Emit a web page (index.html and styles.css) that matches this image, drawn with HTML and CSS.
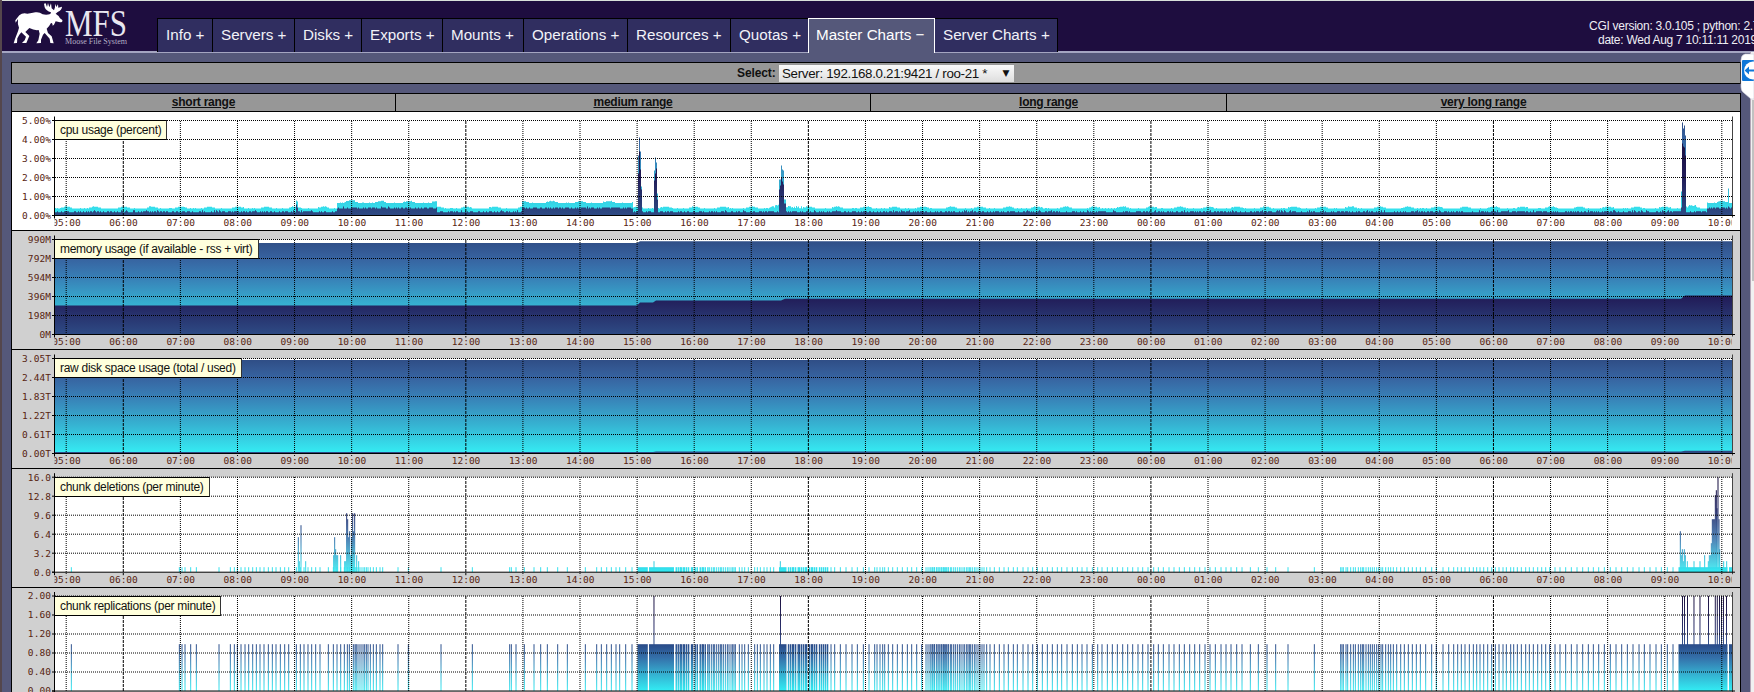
FILE: index.html
```html
<!DOCTYPE html>
<html lang="en">
<head>
<meta charset="utf-8">
<title>MFS Info - Master Charts</title>
<link rel="stylesheet" href="styles.css">
</head>
<body>
<div class="page">
  <header class="header">
    <svg class="logo" width="118" height="48" viewBox="0 0 118 48">
      <g transform="translate(-12 -1) scale(.33333)" fill="#fff">
        <path d="M58 46Q68 37 82 41Q96 40 106 37Q118 35 128 43Q140 46 151 42L153 37Q138 33 134 22L132 11L137 10L141 21L144 9L148 22L153 10L155 25L162 31L165 22L165 11L169 21L174 13L175 23L186 20Q186 30 173 36L167 41Q176 46 180 55L187 60Q189 67 180 67L167 64L162 74L158 77Q158 67 153 69Q148 79 140 86L144 99L155 109L161 130L151 129L149 116L134 99L129 104L123 119L123 129L109 130L115 121L119 101L116 90Q103 92 88 84L76 96L88 108L79 129L66 129L74 121L78 110L64 97L58 104L52 115L51 129L41 130L45 117L54 94L57 83Q52 72 54 57L47 68L46 61Z"/>
      </g>
      <text class="logo-name" x="53" y="35" textLength="62" lengthAdjust="spacingAndGlyphs">MFS</text>
      <text class="logo-sub" x="53" y="43" textLength="62" lengthAdjust="spacingAndGlyphs">Moose File System</text>
    </svg>
    <nav class="tabs">
      <a class="tab w-info">Info +</a><a class="tab w-servers">Servers +</a><a class="tab w-disks">Disks +</a><a class="tab w-exports">Exports +</a><a class="tab w-mounts">Mounts +</a><a class="tab w-operations">Operations +</a><a class="tab w-resources">Resources +</a><a class="tab w-quotas">Quotas +</a><a class="tab w-master active">Master Charts −</a><a class="tab w-server">Server Charts +</a>
    </nav>
    <div class="version"><div>CGI version: 3.0.105 ; python: 2.7.5</div><div class="date">date: Wed Aug 7 10:11:11 2019</div></div>
  </header>
  <div class="select-bar"><b>Select:</b><div class="select"><span>Server: 192.168.0.21:9421 / roo-21 *</span><span class="arrow">▼</span></div></div>
  <main class="panel">
    <div class="ranges"><a>short range</a><a>medium range</a><a>long range</a><a>very long range</a></div>
    <section class="chart white" id="cpu"><h2>cpu usage (percent)</h2></section>
    <section class="chart" id="memory"><h2>memory usage (if available - rss + virt)</h2></section>
    <section class="chart" id="disk"><h2>raw disk space usage (total / used)</h2></section>
    <section class="chart" id="deletions"><h2>chunk deletions (per minute)</h2></section>
    <section class="chart" id="replications"><h2>chunk replications (per minute)</h2></section>
  </main>
  <div class="scrollbar"><div class="thumb"></div></div>
  <svg class="widget" width="14" height="50" viewBox="0 0 14 50">
    <path d="M14 1H5Q1 2 1 7V34Q1 38 4 40L11 46H14Z" fill="#fff" stroke="#c9cad8" stroke-width=".6"/>
    <rect x="2" y="7" width="12" height="21" rx="1" fill="#0d76d8"/>
    <circle cx="13" cy="17.500" r="9" fill="#fff"/>
    <path d="M4.500 17.500L9 13.500V16.500H14V18.500H9V21.500Z" fill="#0d76d8"/>
  </svg>
</div>
<script src="charts.js"></script>
</body>
</html>
```
FILE: styles.css
```css
* { box-sizing: border-box; }
body { margin: 0; overflow: hidden; font-family: "Liberation Sans", Arial, sans-serif; color: #111; }
.page { position: relative; width: 1754px; height: 692px; overflow: hidden; background: #55587a; border-left: 2px solid #54464c; }
.header { display: flex; align-items: flex-start; height: 53px; background: #1e0d3f; border-top: 1px solid #d9e0da; border-bottom: 2px solid #a4a5c1; }
.logo { flex: none; margin: 0 0 0 10px; }
.logo-name { font: 37px "Liberation Serif", serif; fill: #e9e7f0; }
.logo-sub { font: 9px "Liberation Serif", serif; fill: #b5afc6; }
.tabs { display: flex; flex: none; margin: 17px 0 0 27px; height: 35px; }
.tab { display: block; height: 34px; padding: 7px 0 0 8px; border-left: 1px solid #000; border-top: 1px solid #000; background: #302e60; color: #f2f2f8; font-size: 15.2px; line-height: 18px; white-space: nowrap; }
.w-info { width: 55px; } .w-servers { width: 82px; } .w-disks { width: 67px; } .w-exports { width: 81px; }
.w-mounts { width: 81px; } .w-operations { width: 104px; } .w-resources { width: 103px; } .w-quotas { width: 78px; }
.w-master { width: 127px; } .w-server { width: 123px; border-left: 0; border-right: 1px solid #000; }
.tab.active { height: 35px; padding-left: 7px; background: #55587a; border: 1px solid #fff; border-bottom: 0; color: #fff; }
.version { flex: none; margin: 18px 0 0 531px; color: #eeeef4; font-size: 12px; letter-spacing: -.27px; line-height: 14px; white-space: nowrap; }
.date { padding-left: 9px; }
.select-bar { display: flex; align-items: center; gap: 4px; margin: 9px 0 0 9px; width: 1730px; height: 22px; padding-left: 725px; border: 1px solid #000; background: #979797; font-size: 12px; }
.select-bar b { width: 38px; letter-spacing: -.1px; }
.select { display: flex; justify-content: space-between; align-items: center; width: 235px; height: 17px; padding: 0 5px 0 3px; background: linear-gradient(#fafafa, #dedede); font-size: 13.33px; letter-spacing: -.31px; white-space: nowrap; }
.arrow { font: 9px "DejaVu Sans", sans-serif; }
.panel { margin: 9px 0 0 9px; width: 1730px; border: 1px solid #000; border-bottom: 0; }
.ranges { display: grid; grid-template-columns: 383px 475px 356px 1fr; height: 18px; background: #979797; border-bottom: 1px solid #000; font-size: 12px; font-weight: bold; letter-spacing: -.25px; line-height: 17px; text-align: center; }
.ranges a + a { border-left: 1px solid #000; }
.ranges a { text-decoration: underline; }
.chart { position: relative; height: 119px; background: #d0d0d0; border-bottom: 1px solid #000; }
.chart.white { background: #fff; }
.chart svg { display: block; }
.chart text { font: 9.5px "DejaVu Sans Mono", monospace; fill: #572411; }
.chart h2 { position: absolute; left: 42px; top: 8px; margin: 0; height: 20px; padding: 0 5px; border: 1px solid #000; border-right-color: #333; background: #ffffdc; font-size: 12px; font-weight: normal; letter-spacing: -.28px; line-height: 18px; white-space: nowrap; }
.scrollbar { position: absolute; right: 0; top: 52px; width: 4px; height: 640px; background: #f1f1f1; border-left: 1px solid #b4a6b8; }
.thumb { width: 2px; height: 181px; margin: 48px 0 0 1px; background: #c1c1c1; }
.widget { position: absolute; right: 0; top: 53px; }
```
FILE: charts.js
```js
(function () {
  var LEFT = 54.5, RIGHT = 1732, HOUR = 57.09, FIRST = 66.2;

  function rect(x, y, w, h, fill) {
    return '<rect x="' + x + '" y="' + y + '" width="' + w + '" height="' + h + '" fill="' + fill + '"/>';
  }
  function gradient(id, top, stops) {
    return '<linearGradient id="' + id + '" gradientUnits="userSpaceOnUse" x1="0" x2="0" y1="' + (top + 95) + '" y2="' + top + '">' +
      stops.map(function (s) { return '<stop offset="' + s[0] + '" stop-color="' + s[1] + '"/>'; }).join('') + '</linearGradient>';
  }
  function line(x1, y1, x2, y2, attrs) {
    return '<line x1="' + x1 + '" y1="' + y1 + '" x2="' + x2 + '" y2="' + y2 + '" ' + attrs + '/>';
  }

  function draw(id, labels, dy, content) {
    var top = 8.5 + dy, bottom = top + 95, s = '<svg width="1728" height="118" viewBox="12 0 1728 118"><defs>';
    s += gradient(id + '-light', top, [[0, '#35edf4'], [0.3, '#36b3d2'], [0.6, '#387fb6'], [0.8, '#3763a0'], [1, '#2f4c84']]);
    s += gradient(id + '-dark', top, [[0, '#2e4b85'], [0.4, '#211b57'], [1, '#150734']]);
    s += gradient(id + '-full', top, [[0, '#32edf4'], [0.2, '#35a8cc'], [0.35, '#3470aa'], [0.5, '#294886'], [0.65, '#1e2463'], [1, '#110535']]);
    s += '<clipPath id="' + id + '-clip"><rect x="54.5" y="0" width="1677" height="118"/></clipPath></defs>';
    s += rect(LEFT, top, RIGHT - LEFT, 95, '#fff') + content(top, bottom, id);
    for (var i = 0; i < 6; i++) {
      var y = top + i * 19;
      if (i < 5) s += line(55, y, RIGHT, y, 'stroke="#000" stroke-dasharray="1 1"');
      s += line(52, y, 54, y, 'stroke="#000"');
      s += '<text x="22" y="' + (y + 3.3) + '" textLength="29" xml:space="preserve">' + labels[i].padStart(5, '\u00a0') + '</text>';
    }
    s += '<g clip-path="url(#' + id + '-clip)">';
    for (i = 0; i < 30; i++) {
      var x = FIRST + i * HOUR, hour = (5 + i) % 24;
      s += line(x, Math.round(top), x, bottom + 3, 'stroke="#000" stroke-dasharray="' + (hour % 6 ? '1 1' : '3 1') + '"');
      s += '<text x="' + (x - 14) + '" y="' + (bottom + 10.3) + '" textLength="28.500">' + (hour < 10 ? '0' : '') + hour + ':00</text>';
    }
    s += '</g>' + line(54.5, top - 4, 54.5, bottom + 3, 'stroke="#000"') +
      line(RIGHT + 0.5, top - 4, RIGHT + 0.5, bottom + 2, 'stroke="#444"') +
      line(52, bottom, 1735, bottom, 'stroke="#000"') + '</svg>';
    document.getElementById(id).insertAdjacentHTML('afterbegin', s);
  }

  function area(points, bottom, fill) {
    var d = 'M' + points[0][0] + ' ' + bottom;
    points.forEach(function (p) { d += 'L' + p[0] + ' ' + (bottom - p[1]); });
    return '<path d="' + d + 'L' + points[points.length - 1][0] + ' ' + bottom + 'Z" fill="' + fill + '"/>';
  }

  function noise(n) {
    var v = Math.sin(n * 127.1) * 43758.5453;
    return v - Math.floor(v);
  }

  /* x, total height, system height, in pixels */
  var cpuSpikes = [[296.3, 15, 11], [297.3, 14, 8], [638, 60, 42], [639, 78, 64], [640, 64, 46], [641, 29, 26],
    [654, 45, 35], [655, 58, 42], [656, 53, 47], [657, 22, 16], [779.5, 36, 26], [780.5, 36, 30], [781.5, 50, 38],
    [782.5, 46, 34], [783.5, 45, 31], [784.5, 16, 12], [1681, 24, 8], [1682, 93, 72], [1683, 87, 69], [1684, 90, 68],
    [1685, 80, 60], [1728, 27, 9]];

  draw('cpu', ['5.00%', '4.00%', '3.00%', '2.00%', '1.00%', '0.00%'], 0, function (top, bottom, id) {
    var light = [], dark = [];
    for (var x = 55; x < RIGHT; x++) {
      var wave = Math.cos((x - FIRST) / HOUR * 4 * Math.PI);
      var a = 7 + (wave > 0.3 ? 1 : 0) + (wave > 0.8 ? 0.7 : 0) + (noise(x) > 0.85 ? 0.6 : 0);
      var b = 3.2 + (noise(x + 500) > 0.55 ? 1 : 0) + (noise(x + 900) > 0.92 ? 1 : 0);
      if ((x > 336 && x < 437) || (x > 521 && x < 633) || x > 1706) { a += 5.5; b += 3.8; }
      if (x > 344 && x < 355) a += 1;
      if ((x > 768 && x < 802) || (x > 1685 && x < 1696)) a += noise(x + 80) * 2.5;
      cpuSpikes.forEach(function (p) { if (Math.abs(p[0] - x) <= 0.5) { a = p[1]; b = p[2]; } });
      light.push([x, a], [x + 1, a]);
      dark.push([x, b], [x + 1, b]);
    }
    return area(light, bottom, 'url(#' + id + '-light)') + area(dark, bottom, 'url(#' + id + '-dark)');
  });

  draw('memory', ['990M', '792M', '594M', '396M', '198M', '0M'], 0, function (top, bottom, id) {
    return area([[LEFT, 91.5], [637, 91.5], [640, 93.2], [RIGHT, 93.2]], bottom, 'url(#' + id + '-light)') +
      area([[LEFT, 29], [637, 29], [640, 32], [653, 32], [656, 34], [781, 34], [785, 35.7], [1681, 35.7], [1685, 39], [RIGHT, 39]], bottom, 'url(#' + id + '-dark)');
  });

  draw('disk', ['3.05T', '2.44T', '1.83T', '1.22T', '0.61T', '0.00T'], 0, function (top, bottom, id) {
    return area([[LEFT, 93.5], [RIGHT, 93.5]], bottom, 'url(#' + id + '-light)') +
      area([[LEFT, 1.4], [653, 1.4], [656, 2], [1681, 2], [1685, 2.8], [RIGHT, 2.8]], bottom, 'url(#' + id + '-dark)');
  });

  /* minutes with events, grouped as offset + thirds of a pixel */
  var groups = [
    [0, '214 538 546 555 572 589 657 691 703 712 723 735 746 758 769 780 792 805 817 828 841 854 866 889 901 912 924 935 947 960 985 1000 1011 1022 1033 1042 1048 1060 1065 1068 1071 1077 1083 1089 1094 1099 1104 1111 1120 1129 1140 1148 1194 1225 1323'],
    [450, '67 179 184 198 223 252 272 292 323 352 406 440 454 470 484 498 509 527 546 678 684 690 693 699 703 709 715 724 727 735 741 750 756 759 765 773 779 785 790 794 800 806 811 815 820 826 832 837 843 848 852 856 868 876 884 895 914 922 931 942 951 961 971 1015 1021 1027 1030 1036 1044 1048 1054 1060 1066 1069 1078 1084 1087 1093 1099 1108 1114 1120 1126 1132 1143 1154 1171 1188 1206 1222 1240 1257 1274 1281 1290 1298 1304 1315 1328 1342 1357 1372 1385 1400 1415 1428 1434 1440 1447 1453 1460 1467 1474 1480 1487 1494'],
    [930, '3 9 14 21 27 33 39 43 49 55 61 65 71 76 82 88 93 99 104 110 114 118 122 127 133 138 144 150 156 162 170 180 193 208 222 235 250 262 279 294 308 322 337 352 367 382 395 411 427 442 456 471 487 503 516 532 547 562 578 593 608 624 638 654 671 685 700 717 732 748 763 779 794 809 825 840 856 873 888 903 920 936 961 985 1011 1037 1074 1153'],
    [1300, '122 126 130 138 143 152 160 166 175 182 187 191 198 205 211 217 223 230 236 243 248 257 265 272 280 290 302 313 325 337 349 361 377 395 409 429 446 461 473 484 495 508 520 530 540 551 563 575 586 597 609 619 632 641 652 664 677 688 700 713 725 737 749 765 780 797 814 831 848 865 880 896 913 931 948 965 982 999 1017 1033 1050 1068 1084 1102 1119']
  ];
  var blocks = [[637.5, 10.3], [649, 25], [779, 7.5], [1678.5, 49], [1729, 3]];

  function bars(height, bottom, fill) {
    var s = '';
    groups.forEach(function (g) {
      g[1].split(' ').forEach(function (n) {
        var x = g[0] + n / 3, busy = (x > 674 && x < 709) || (x > 786 && x < 828);
        s += rect((x - 0.48).toFixed(2), bottom - height, busy ? 1.45 : 0.98, height, fill);
      });
    });
    blocks.forEach(function (b) { s += rect(b[0], bottom - height, b[1], height, fill); });
    return s;
  }

  var deletions = [
    [0, [895, 35], [898, 11], [903, 47], [917, 11], [1001, 17], [1004, 35], [1007, 23], [1010, 17], [1013, 17], [1022, 17], [1034, 11], [1037, 11], [1040, 59], [1043, 53], [1046, 35], [1049, 41], [1052, 17], [1055, 35], [1058, 59], [1061, 41], [1064, 59], [1070, 17], [1076, 11]],
    [450, [612, 11], [991, 11]],
    [1300, [1141, 41], [1144, 17], [1147, 23], [1150, 11], [1153, 23], [1156, 17], [1162, 11], [1182, 11], [1200, 11], [1214, 17], [1225, 11], [1228, 17], [1231, 17], [1234, 29], [1237, 53], [1240, 53], [1243, 53], [1246, 77], [1249, 82], [1251, 64], [1254, 95], [1257, 53], [1259, 23], [1271, 11], [1280, 11]]
  ];

  draw('deletions', ['16.0', '12.8', '9.6', '6.4', '3.2', '0.0'], -0.3, function (top, bottom, id) {
    var fill = 'url(#' + id + '-full)', s = bars(5, bottom, fill);
    deletions.forEach(function (g) {
      g.slice(1).forEach(function (p) { s += rect((g[0] + p[0] / 3 - 0.5).toFixed(2), bottom - p[1], 1, p[1], fill); });
    });
    return s;
  });

  draw('replications', ['2.00', '1.60', '1.20', '0.80', '0.40', '0.00'], -0.5, function (top, bottom, id) {
    var fill = 'url(#' + id + '-full)', s = bars(46.8, bottom, fill);
    [654, 780.5, 1682.5, 1684.5, 1687.5, 1694, 1700, 1708.5, 1715.3, 1717.3, 1719.5, 1721.5, 1723.5, 1726.5].forEach(function (x) {
      s += rect(x - 0.5, top, 0.95, 95, fill);
    });
    return s;
  });
})();
```
